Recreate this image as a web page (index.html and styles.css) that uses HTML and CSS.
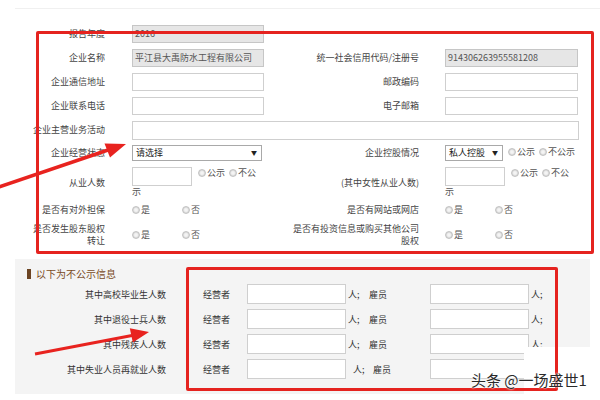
FILE: index.html
```html
<!DOCTYPE html>
<html>
<head>
    <title>年度报告</title>
    <link rel="stylesheet" href="styles.css">
</head>
<body>
    <div class="page">
        <div class="topline"></div>

        <div class="form">
            <div class="lbl">报告年度</div>
            <div class="fld"><div class="inp ro">2016</div></div>
            <div></div>
            <div></div>

            <div class="lbl">企业名称</div>
            <div class="fld"><div class="inp ro">平江县大禹防水工程有限公司</div></div>
            <div class="lbl lbl2">统一社会信用代码/注册号</div>
            <div class="fld fld2"><div class="inp ro">914306263955581208</div></div>

            <div class="lbl">企业通信地址</div>
            <div class="fld"><div class="inp"></div></div>
            <div class="lbl lbl2">邮政编码</div>
            <div class="fld fld2"><div class="inp"></div></div>

            <div class="lbl">企业联系电话</div>
            <div class="fld"><div class="inp"></div></div>
            <div class="lbl lbl2">电子邮箱</div>
            <div class="fld fld2"><div class="inp"></div></div>

            <div class="lbl">企业主营业务活动</div>
            <div class="fld span"><div class="inp full"></div></div>

            <div class="lbl">企业经营状态</div>
            <div class="fld"><div class="select">请选择<span class="caret">▼</span></div></div>
            <div class="lbl lbl2">企业控股情况</div>
            <div class="fld fld2 line nowrap">
                <div class="select small">私人控股<span class="caret">▼</span></div><span class="opt"><span class="radio"></span>公示</span><span class="opt"><span class="radio"></span>不公示</span>
            </div>

            <div class="lbl">从业人数</div>
            <div class="fld line narrow">
                <div class="inp num"></div><span class="opt"><span class="radio"></span>公示</span><span class="opt"><span class="radio"></span>不公示</span>
            </div>
            <div class="lbl lbl2">(其中女性从业人数)</div>
            <div class="fld fld2 line narrow">
                <div class="inp num"></div><span class="opt"><span class="radio"></span>公示</span><span class="opt"><span class="radio"></span>不公示</span>
            </div>

            <div class="lbl">是否有对外担保</div>
            <div class="fld line"><span class="opt yn"><span class="radio"></span>是</span><span class="opt yn"><span class="radio"></span>否</span></div>
            <div class="lbl lbl2">是否有网站或网店</div>
            <div class="fld fld2 line"><span class="opt yn"><span class="radio"></span>是</span><span class="opt yn"><span class="radio"></span>否</span></div>

            <div class="lbl">是否发生股东股权转让</div>
            <div class="fld line"><span class="opt yn"><span class="radio"></span>是</span><span class="opt yn"><span class="radio"></span>否</span></div>
            <div class="lbl lbl2">是否有投资信息或购买其他公司股权</div>
            <div class="fld fld2 line"><span class="opt yn"><span class="radio"></span>是</span><span class="opt yn"><span class="radio"></span>否</span></div>
        </div>

        <div class="panel">
            <div class="panel-title"><span class="bar"></span>以下为不公示信息</div>
            <div class="rows">
                <div class="plbl">其中高校毕业生人数</div>
                <div class="who">经营者</div><div class="inp pinp"></div><div class="unit">人;</div>
                <div class="who2">雇员</div><div class="inp pinp"></div><div class="unit">人;</div>

                <div class="plbl">其中退役士兵人数</div>
                <div class="who">经营者</div><div class="inp pinp"></div><div class="unit">人;</div>
                <div class="who2">雇员</div><div class="inp pinp"></div><div class="unit">人;</div>

                <div class="plbl">其中残疾人人数</div>
                <div class="who">经营者</div><div class="inp pinp"></div><div class="unit">人;</div>
                <div class="who2">雇员</div><div class="inp pinp"></div><div class="unit">人;</div>

                <div class="plbl">其中失业人员再就业人数</div>
                <div class="who">经营者</div><div class="inp pinp"></div><div class="unit shift">人;</div>
                <div class="who2 shift">雇员</div><div class="inp pinp"></div><div class="unit"></div>
            </div>
        </div>

        <div class="patch"></div>
        <div class="mark mark1"></div>
        <div class="mark mark2"></div>

        <svg class="arrows" width="600" height="400" viewBox="0 0 600 400">
            <line x1="-4" y1="188" x2="108" y2="150" stroke="#e8231f" stroke-width="3.5"/>
            <polygon points="126,144 110,157.5 104.5,143.5" fill="#e8231f"/>
            <line x1="35" y1="354" x2="132" y2="335.5" stroke="#e8231f" stroke-width="3"/>
            <polygon points="149,332 132.8,342.5 129.8,328.3" fill="#e8231f"/>
        </svg>

        <div class="watermark">头条 @一场盛世1</div>
    </div>
</body>
</html>
```

FILE: styles.css
```css
body {
    margin: 0;
    background-color: #fff;
    font-family: "Noto Sans CJK SC", "Liberation Sans", sans-serif;
    font-size: 9px;
    color: #444;
}
.page {
    position: relative;
    width: 600px;
    height: 400px;
    overflow: hidden;
}
.topline {
    margin: 8px 0 0 15px;
    border-top: 1px solid #f0f0f0;
}
.form {
    display: grid;
    grid-template-columns: 105px 185px 129px 160px;
    grid-template-rows: 18px 18px 18px 18px 18px 16px 31px 12px 26px;
    row-gap: 6px;
    margin-top: 16px;
}
.lbl {
    padding-left: 28px;
    text-align: right;
    line-height: 12px;
    align-self: center;
}
.lbl2 {
    padding-left: 0;
}
.fld {
    padding-left: 27px;
}
.fld2 {
    padding-left: 26px;
}
.span {
    grid-column: 2 / 5;
}
.line {
    line-height: 12px;
    align-self: center;
}
.nowrap {
    white-space: nowrap;
}
.narrow {
    width: 131px;
    align-self: start;
}
.fld2.narrow {
    width: 130px;
}
.inp {
    box-sizing: border-box;
    width: 132px;
    height: 18px;
    border: 1px solid #cfcfcf;
    background-color: #fff;
    padding: 0 2px;
    line-height: 16px;
    color: #555;
    white-space: nowrap;
    overflow: hidden;
}
.fld2 .inp {
    width: 133px;
}
.inp.ro {
    background-color: #e6e6e6;
    border-color: #c6c6c6;
}
.inp.full {
    width: 447px;
    height: 19px;
}
.fld .inp.num {
    display: inline-block;
    vertical-align: top;
    width: 60px;
    height: 19px;
    margin-right: 6px;
}
.select {
    box-sizing: border-box;
    position: relative;
    width: 130px;
    height: 16px;
    border: 1px solid #a9a9a9;
    padding: 0 3px;
    line-height: 14px;
    color: #222;
}
.select.small {
    display: inline-block;
    vertical-align: middle;
    width: 58px;
    margin-right: 5px;
}
.caret {
    position: absolute;
    right: 4px;
    top: 0;
    font-size: 6px;
    color: #222;
}
.opt {
    margin-right: 4px;
    color: #555;
}
.opt.yn {
    display: inline-block;
    width: 50px;
    margin-right: 0;
}
.radio {
    display: inline-block;
    box-sizing: border-box;
    width: 8px;
    height: 8px;
    margin-right: 1px;
    border: 1px solid #c2c2c2;
    border-radius: 50%;
    background: radial-gradient(circle, #f4f4f4 30%, #d6d6d6 70%);
    vertical-align: -1px;
}
.panel {
    box-sizing: border-box;
    margin: 11px 0 0 15px;
    width: 575px;
    height: 135px;
    padding: 9px 0 0 12px;
    background-color: #f4f4f4;
    color: #333;
}
.panel-title {
    font-size: 10px;
    line-height: 12px;
    color: #7a4b1e;
}
.bar {
    display: inline-block;
    width: 4px;
    height: 10px;
    margin-right: 5px;
    background-color: #6b4423;
    vertical-align: -1px;
}
.rows {
    display: grid;
    grid-template-columns: 139px 81px 100px 22px 61px 100px 30px;
    grid-auto-rows: 20px;
    row-gap: 5px;
    margin-top: 4px;
    align-items: center;
}
.plbl {
    text-align: right;
}
.who {
    padding-left: 37px;
}
.pinp.inp {
    width: 99px;
    height: 20px;
}
.unit {
    padding-left: 1px;
}
.unit.shift {
    padding-left: 6px;
}
.who2.shift {
    padding-left: 4px;
}
.patch {
    position: absolute;
    left: 524px;
    top: 347px;
    width: 76px;
    height: 53px;
    background-color: #fff;
}
.mark {
    position: absolute;
    box-sizing: border-box;
    border: 3px solid #e5231f;
    border-radius: 2px;
}
.mark1 {
    left: 36px;
    top: 31px;
    width: 558px;
    height: 223px;
}
.mark2 {
    left: 186px;
    top: 267px;
    width: 372px;
    height: 124px;
}
.arrows {
    position: absolute;
    left: 0;
    top: 0;
}
.watermark {
    position: absolute;
    left: 471px;
    top: 370px;
    font-size: 15px;
    line-height: 20px;
    color: #2a2a2a;
    text-shadow: 0 0 2px #fff, 0 0 2px #fff;
    white-space: nowrap;
}
```
